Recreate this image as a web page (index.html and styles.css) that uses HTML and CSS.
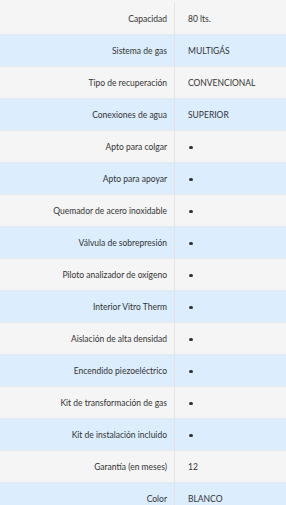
FILE: index.html
```html
<!DOCTYPE html>
<html lang="es">
<head>
<meta charset="utf-8">
<link rel="stylesheet" href="styles.css">
</head>
<body>
<table class="specs">
<tbody>
<tr class="odd"><th>Capacidad</th><td>80 lts.</td></tr>
<tr class="even"><th>Sistema de gas</th><td>MULTIGÁS</td></tr>
<tr class="odd"><th>Tipo de recuperación</th><td>CONVENCIONAL</td></tr>
<tr class="even"><th>Conexiones de agua</th><td>SUPERIOR</td></tr>
<tr class="odd"><th>Apto para colgar</th><td><span class="dot"></span></td></tr>
<tr class="even"><th>Apto para apoyar</th><td><span class="dot"></span></td></tr>
<tr class="odd"><th>Quemador de acero inoxidable</th><td><span class="dot"></span></td></tr>
<tr class="even"><th>Válvula de sobrepresión</th><td><span class="dot"></span></td></tr>
<tr class="odd"><th>Piloto analizador de oxígeno</th><td><span class="dot"></span></td></tr>
<tr class="even"><th>Interior Vitro Therm</th><td><span class="dot"></span></td></tr>
<tr class="odd"><th>Aislación de alta densidad</th><td><span class="dot"></span></td></tr>
<tr class="even"><th>Encendido piezoeléctrico</th><td><span class="dot"></span></td></tr>
<tr class="odd"><th>Kit de transformación de gas</th><td><span class="dot"></span></td></tr>
<tr class="even"><th>Kit de instalación incluido</th><td><span class="dot"></span></td></tr>
<tr class="odd"><th>Garantía (en meses)</th><td>12</td></tr>
<tr class="even"><th>Color</th><td>BLANCO</td></tr>
</tbody>
</table>
</body>
</html>
```
FILE: styles.css
```css
html, body {
  margin: 0;
  padding: 0;
  background: #f5f5f5;
}
body {
  font-family: Lato, "Open Sans", sans-serif;
  font-size: 8.5px;
  color: #333;
  padding-top: 3px;
}
.specs {
  width: 286px;
  border-collapse: collapse;
  table-layout: fixed;
}
.specs th, .specs td {
  height: 31px;
  padding: 0;
  border-bottom: 1px solid #e8e8e8;
  font-weight: normal;
  vertical-align: middle;
}
.specs th {
  width: 167px;
  text-align: right;
  padding-right: 7px;
  border-right: 1px solid #e3e3e3;
}
.specs td {
  padding-left: 13px;
}
.odd { background: #f5f5f5; }
.even { background: #dcedfe; }
.dot {
  display: inline-block;
  width: 3.5px;
  height: 3.5px;
  margin-left: 1px;
  border-radius: 50%;
  background: #333;
  vertical-align: middle;
}
```
